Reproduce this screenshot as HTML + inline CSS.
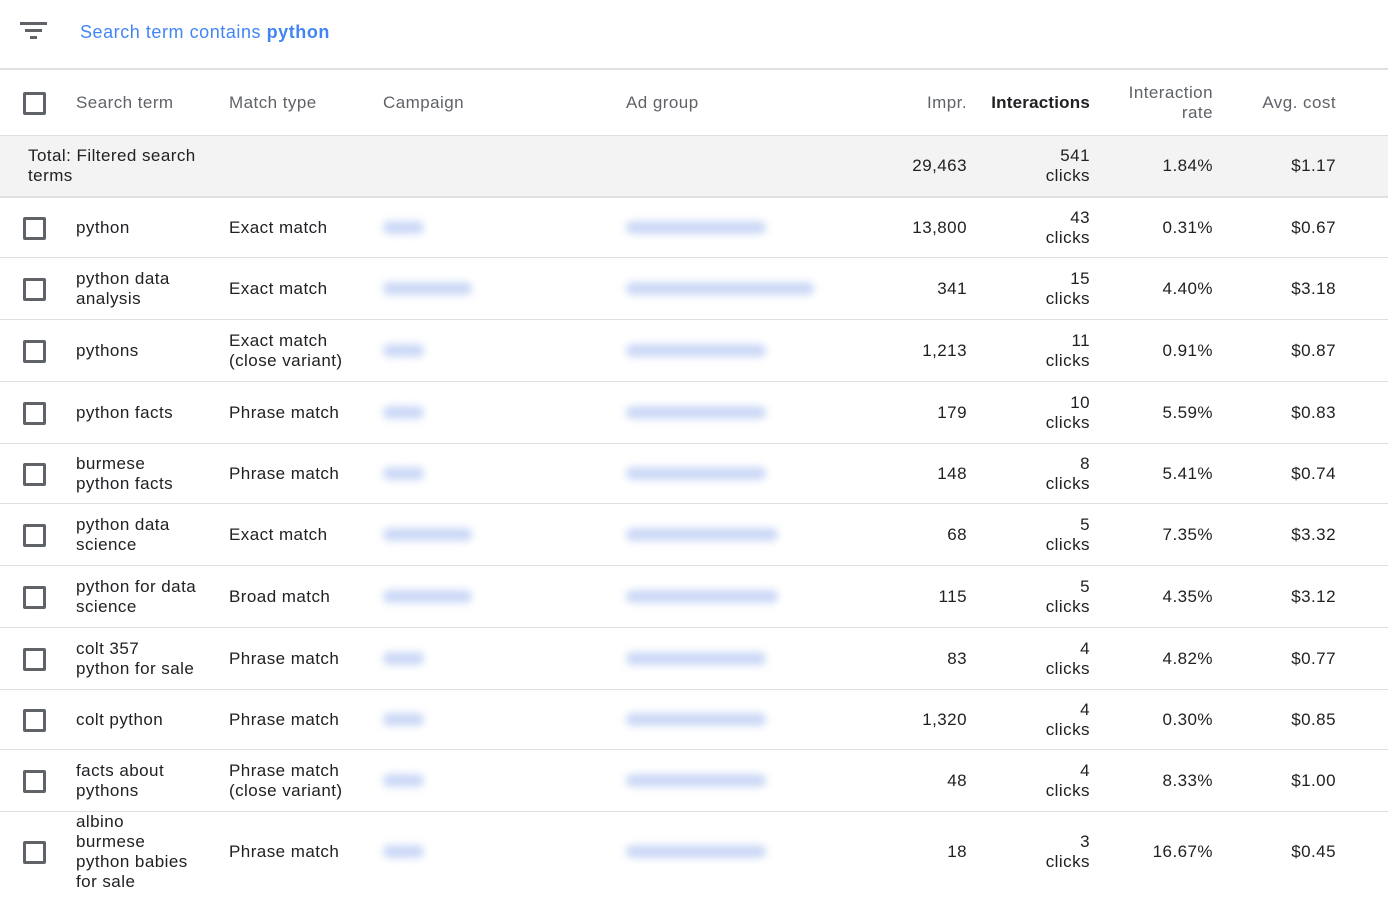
<!DOCTYPE html>
<html><head><meta charset="utf-8"><style>
*{margin:0;padding:0;box-sizing:border-box}
body{width:1388px;height:902px;overflow:hidden;background:#fff;font-family:"Liberation Sans",Arial,sans-serif;font-size:17px;letter-spacing:0.45px;color:#202124;position:relative}
.r{position:absolute;left:0;width:1388px;border-bottom:1px solid #e0e0e0}
.c{position:absolute;top:0;height:100%;display:flex;align-items:center;line-height:20px;white-space:nowrap}
.rt{justify-content:flex-end;text-align:right}
.cb{position:absolute;left:23px;width:23px;height:23px;border:3px solid #5f6368;border-radius:2px;top:50%;margin-top:-11px}
.b{position:absolute;height:13px;top:50%;margin-top:-7px;background:#cbd8f6;border-radius:6px;filter:blur(4px)}
.h{color:#5f6368}
</style></head><body>
<svg style="position:absolute;left:20px;top:22px" width="28" height="20" viewBox="0 0 28 20"><rect x="0" y="0" width="27" height="3" fill="#5f6368"/><rect x="5" y="7" width="17" height="3" fill="#5f6368"/><rect x="10" y="14" width="7" height="3" fill="#5f6368"/></svg>
<div style="position:absolute;left:80px;top:20px;color:#4285f4;font-size:18px;letter-spacing:0.55px;line-height:24px">Search term contains <b>python</b></div>
<div style="position:absolute;left:0;top:68px;width:1388px;border-top:2px solid #e0e0e0"></div>

<div class="r h" style="top:70px;height:66px">
<div class="cb"></div>
<div class="c" style="left:76px">Search term</div>
<div class="c" style="left:229px">Match type</div>
<div class="c" style="left:383px">Campaign</div>
<div class="c" style="left:626px">Ad group</div>
<div class="c rt" style="right:421px">Impr.</div>
<div class="c rt" style="right:298px;color:#202124;font-weight:bold;letter-spacing:0.2px">Interactions</div>
<div class="c rt" style="right:175px">Interaction<br>rate</div>
<div class="c rt" style="right:52px">Avg. cost</div>
</div>

<div class="r" style="top:136px;height:62px;background:#f3f3f3;border-bottom:2px solid #e0e0e0">
<div class="c" style="left:28px">Total: Filtered search<br>terms</div>
<div class="c rt" style="right:421px">29,463</div>
<div class="c rt" style="right:298px">541<br>clicks</div>
<div class="c rt" style="right:175px">1.84%</div>
<div class="c rt" style="right:52px">$1.17</div>
</div>

<div class="r" style="top:198px;height:60px"><div class="cb"></div><div class="c" style="left:76px">python</div><div class="c" style="left:229px">Exact match</div><div class="b" style="left:383px;width:41px"></div><div class="b" style="left:626px;width:140px"></div><div class="c rt" style="right:421px">13,800</div><div class="c rt" style="right:298px">43<br>clicks</div><div class="c rt" style="right:175px">0.31%</div><div class="c rt" style="right:52px">$0.67</div></div>

<div class="r" style="top:258px;height:62px"><div class="cb"></div><div class="c" style="left:76px">python data<br>analysis</div><div class="c" style="left:229px">Exact match</div><div class="b" style="left:383px;width:89px"></div><div class="b" style="left:626px;width:188px"></div><div class="c rt" style="right:421px">341</div><div class="c rt" style="right:298px">15<br>clicks</div><div class="c rt" style="right:175px">4.40%</div><div class="c rt" style="right:52px">$3.18</div></div>

<div class="r" style="top:320px;height:62px"><div class="cb"></div><div class="c" style="left:76px">pythons</div><div class="c" style="left:229px">Exact match<br>(close variant)</div><div class="b" style="left:383px;width:41px"></div><div class="b" style="left:626px;width:140px"></div><div class="c rt" style="right:421px">1,213</div><div class="c rt" style="right:298px">11<br>clicks</div><div class="c rt" style="right:175px">0.91%</div><div class="c rt" style="right:52px">$0.87</div></div>

<div class="r" style="top:382px;height:62px"><div class="cb"></div><div class="c" style="left:76px">python facts</div><div class="c" style="left:229px">Phrase match</div><div class="b" style="left:383px;width:41px"></div><div class="b" style="left:626px;width:140px"></div><div class="c rt" style="right:421px">179</div><div class="c rt" style="right:298px">10<br>clicks</div><div class="c rt" style="right:175px">5.59%</div><div class="c rt" style="right:52px">$0.83</div></div>

<div class="r" style="top:444px;height:60px"><div class="cb"></div><div class="c" style="left:76px">burmese<br>python facts</div><div class="c" style="left:229px">Phrase match</div><div class="b" style="left:383px;width:41px"></div><div class="b" style="left:626px;width:140px"></div><div class="c rt" style="right:421px">148</div><div class="c rt" style="right:298px">8<br>clicks</div><div class="c rt" style="right:175px">5.41%</div><div class="c rt" style="right:52px">$0.74</div></div>

<div class="r" style="top:504px;height:62px"><div class="cb"></div><div class="c" style="left:76px">python data<br>science</div><div class="c" style="left:229px">Exact match</div><div class="b" style="left:383px;width:89px"></div><div class="b" style="left:626px;width:152px"></div><div class="c rt" style="right:421px">68</div><div class="c rt" style="right:298px">5<br>clicks</div><div class="c rt" style="right:175px">7.35%</div><div class="c rt" style="right:52px">$3.32</div></div>

<div class="r" style="top:566px;height:62px"><div class="cb"></div><div class="c" style="left:76px">python for data<br>science</div><div class="c" style="left:229px">Broad match</div><div class="b" style="left:383px;width:89px"></div><div class="b" style="left:626px;width:152px"></div><div class="c rt" style="right:421px">115</div><div class="c rt" style="right:298px">5<br>clicks</div><div class="c rt" style="right:175px">4.35%</div><div class="c rt" style="right:52px">$3.12</div></div>

<div class="r" style="top:628px;height:62px"><div class="cb"></div><div class="c" style="left:76px">colt 357<br>python for sale</div><div class="c" style="left:229px">Phrase match</div><div class="b" style="left:383px;width:41px"></div><div class="b" style="left:626px;width:140px"></div><div class="c rt" style="right:421px">83</div><div class="c rt" style="right:298px">4<br>clicks</div><div class="c rt" style="right:175px">4.82%</div><div class="c rt" style="right:52px">$0.77</div></div>

<div class="r" style="top:690px;height:60px"><div class="cb"></div><div class="c" style="left:76px">colt python</div><div class="c" style="left:229px">Phrase match</div><div class="b" style="left:383px;width:41px"></div><div class="b" style="left:626px;width:140px"></div><div class="c rt" style="right:421px">1,320</div><div class="c rt" style="right:298px">4<br>clicks</div><div class="c rt" style="right:175px">0.30%</div><div class="c rt" style="right:52px">$0.85</div></div>

<div class="r" style="top:750px;height:62px"><div class="cb"></div><div class="c" style="left:76px">facts about<br>pythons</div><div class="c" style="left:229px">Phrase match<br>(close variant)</div><div class="b" style="left:383px;width:41px"></div><div class="b" style="left:626px;width:140px"></div><div class="c rt" style="right:421px">48</div><div class="c rt" style="right:298px">4<br>clicks</div><div class="c rt" style="right:175px">8.33%</div><div class="c rt" style="right:52px">$1.00</div></div>

<div class="r" style="top:812px;height:80px;border-bottom:none"><div class="cb"></div><div class="c" style="left:76px">albino<br>burmese<br>python babies<br>for sale</div><div class="c" style="left:229px">Phrase match</div><div class="b" style="left:383px;width:41px"></div><div class="b" style="left:626px;width:140px"></div><div class="c rt" style="right:421px">18</div><div class="c rt" style="right:298px">3<br>clicks</div><div class="c rt" style="right:175px">16.67%</div><div class="c rt" style="right:52px">$0.45</div></div>
</body></html>
